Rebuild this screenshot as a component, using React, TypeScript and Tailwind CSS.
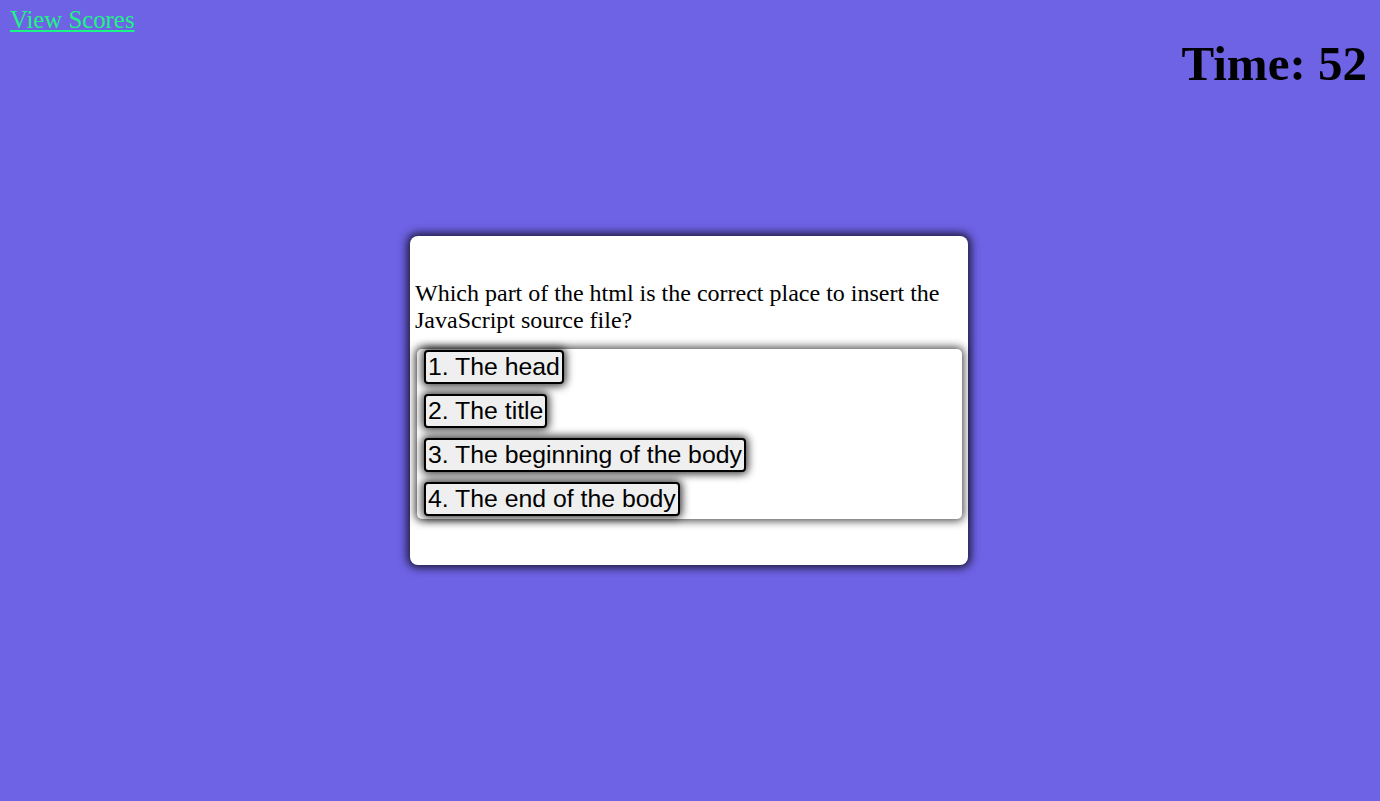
const answers = [
  "1. The head",
  "2. The title",
  "3. The beginning of the body",
  "4. The end of the body",
];

export default function App() {
  return (
    <div className="min-h-[801px] bg-[#6e62e5] font-['Liberation_Serif',serif] relative">
      {/* Header */}
      <div className="flex justify-between items-start">
        <a href="#" className="ml-[10px] mt-[6px] text-[24.8px] leading-[28px] text-[#1cf586] underline">
          View Scores
        </a>
        <h1 className="mt-[35px] mr-[13px] text-[49px] leading-[57px] font-bold text-black">
          Time: 52
        </h1>
      </div>

      {/* Quiz card */}
      <div className="flex justify-center mt-[144px]">
        <div className="w-[558px] h-[329px] -translate-x-[1px] bg-white rounded-[8px] shadow-[0_0_8px_3px_rgba(0,0,0,0.75)] pt-[44px] px-[5px]">
          <p className="text-[24px] leading-[27px] text-black">
            Which part of the html is the correct place to insert the JavaScript source file?
          </p>
          <div className="mt-[15px] ml-[2px] mr-[1px] rounded-[5px] bg-white shadow-[0_0_8px_2px_rgba(0,0,0,0.7)] pt-[1px] pl-[7px] pb-[3px] flex flex-col items-start gap-[10px]">
            {answers.map((a) => (
              <button
                key={a}
                className="bg-[#efefef] border-2 border-black rounded-[4px] px-[2px] py-0 text-[24.8px] leading-[30px] text-black font-['Liberation_Sans',sans-serif] shadow-[0_0_8px_2px_rgba(0,0,0,0.8)]"
              >
                {a}
              </button>
            ))}
          </div>
        </div>
      </div>
    </div>
  );
}
